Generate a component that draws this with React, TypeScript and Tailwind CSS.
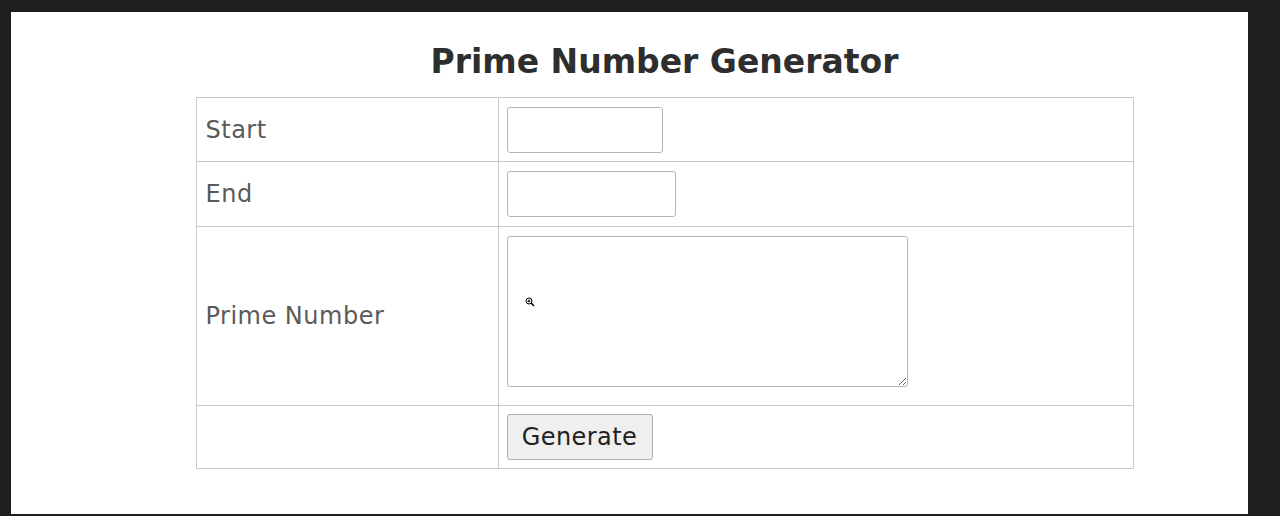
export default function App() {
  return (
    <div className="h-[516px] w-[1280px] bg-[#1e1e1e] pl-[11px] pt-[12px] pb-[2px] pr-[32px] flex" style={{ fontFamily: "'DejaVu Sans', Inter, sans-serif" }}>
      <div className="flex-1 bg-white flex flex-col items-center pl-[70px]">
        <h1 className="mt-[28px] text-[33px] leading-[44px] font-bold text-[#2e2e2e]">Prime Number Generator</h1>
        <table className="mt-[13px] border-collapse border border-[#c9c9c9] text-[24px] tracking-[0.5px] text-[#5a5a5a]">
          <tbody>
            <tr className="h-[64px]">
              <td className="w-[302px] border border-[#c9c9c9] px-[9px]">Start</td>
              <td className="w-[635px] border border-[#c9c9c9] px-[8px]">
                <input className="block w-[156px] h-[46px] border border-[#b5b5b5] rounded-[3px] bg-white" />
              </td>
            </tr>
            <tr className="h-[65px]">
              <td className="border border-[#c9c9c9] px-[9px]">End</td>
              <td className="border border-[#c9c9c9] px-[8px]">
                <input className="block w-[169px] h-[46px] border border-[#b5b5b5] rounded-[3px] bg-white" />
              </td>
            </tr>
            <tr className="h-[179px]">
              <td className="border border-[#c9c9c9] px-[9px]">Prime Number</td>
              <td className="border border-[#c9c9c9] px-[8px] pt-[9px] align-top">
                <div className="relative w-[401px] h-[151px]">
                  <textarea className="block w-full h-full border border-[#b5b5b5] rounded-[3px] bg-white resize" />
                  <svg className="absolute left-[18px] top-[61px]" width="10" height="10" viewBox="0 0 10 10">
                    <circle cx="4" cy="4" r="3" fill="white" stroke="black" strokeWidth="1" />
                    <path d="M2.5 4h3M4 2.5v3" stroke="black" strokeWidth="1" />
                    <path d="M6 6l3 3" stroke="black" strokeWidth="1.6" />
                  </svg>
                </div>
              </td>
            </tr>
            <tr className="h-[63px]">
              <td className="border border-[#c9c9c9] px-[9px]"></td>
              <td className="border border-[#c9c9c9] px-[8px]">
                <button className="block w-[146px] h-[46px] bg-[#efefef] border border-[#b0b0b0] rounded-[3px] text-[24px] tracking-[0.4px] text-[#222]">Generate</button>
              </td>
            </tr>
          </tbody>
        </table>
      </div>
    </div>
  );
}
